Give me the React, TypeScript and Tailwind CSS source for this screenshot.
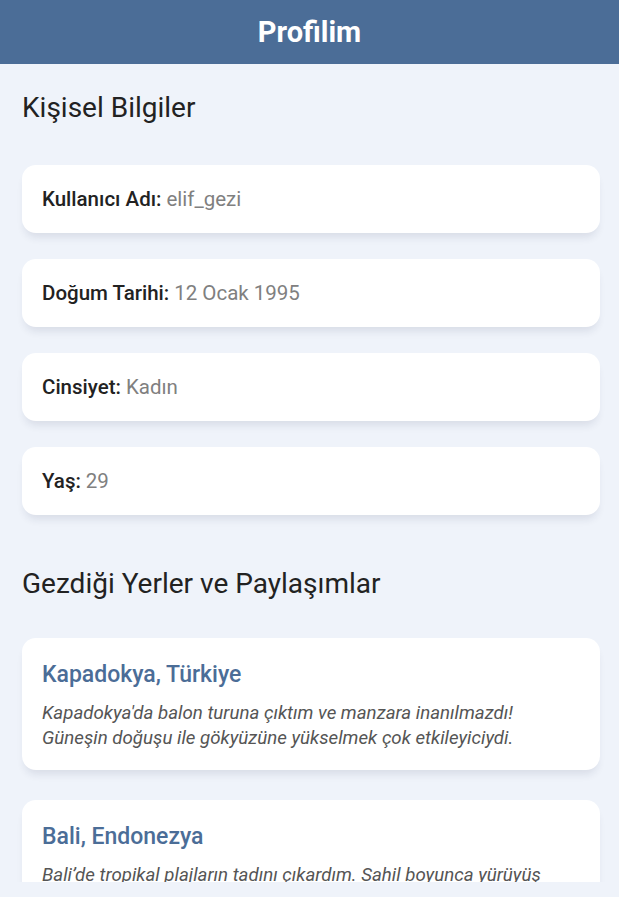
import React from "react";

const info = [
  { label: "Kullanıcı Adı:", value: "elif_gezi" },
  { label: "Doğum Tarihi:", value: "12 Ocak 1995" },
  { label: "Cinsiyet:", value: "Kadın" },
  { label: "Yaş:", value: "29" },
];

const posts = [
  {
    title: "Kapadokya, Türkiye",
    text: "Kapadokya'da balon turuna çıktım ve manzara inanılmazdı! Güneşin doğuşu ile gökyüzüne yükselmek çok etkileyiciydi.",
  },
  {
    title: "Bali, Endonezya",
    text: "Bali’de tropikal plajların tadını çıkardım. Sahil boyunca yürüyüş yapmak ve gün batımını izlemek harikaydı.",
  },
];

const cardShadow = "shadow-[0_7px_9px_-3px_rgba(30,40,70,0.11)]";

export default function App() {
  return (
    <div
      className="w-[619px] h-[897px] bg-[#eff3fa] overflow-hidden"
      style={{ fontFamily: "Roboto, 'Noto Sans', sans-serif" }}
    >
      <header className="h-16 bg-[#4b6d97] flex items-center justify-center">
        <h1 className="text-[29px] font-bold text-white leading-none">Profilim</h1>
      </header>
      <div className="h-[818px] overflow-hidden pl-[22px] pr-[19px]">
        <h2 className="mt-[27px] text-[28px] leading-[34px] text-[#222]">Kişisel Bilgiler</h2>
        <div className="mt-[40px] flex flex-col gap-[26px]">
          {info.map((i) => (
            <div
              key={i.label}
              className={`h-[68px] bg-white rounded-[14px] px-5 flex items-center text-[20.5px] ${cardShadow}`}
            >
              <span className="font-medium text-[#222]">{i.label}</span>
              <span className="ml-[5px] text-[#808080]">{i.value}</span>
            </div>
          ))}
        </div>
        <h2 className="mt-[52px] text-[28px] leading-[34px] text-[#222]">
          Gezdiği Yerler ve Paylaşımlar
        </h2>
        <div className="mt-[37px] flex flex-col gap-[30px]">
          {posts.map((p) => (
            <div key={p.title} className={`bg-white rounded-[14px] px-5 pt-[21px] pb-[19px] ${cardShadow}`}>
              <div className="text-[23px] leading-[32px] font-medium text-[#4b6d97]">{p.title}</div>
              <p className="mt-[10px] text-[18.7px] leading-[25px] italic text-[#555]">{p.text}</p>
            </div>
          ))}
        </div>
      </div>
    </div>
  );
}
